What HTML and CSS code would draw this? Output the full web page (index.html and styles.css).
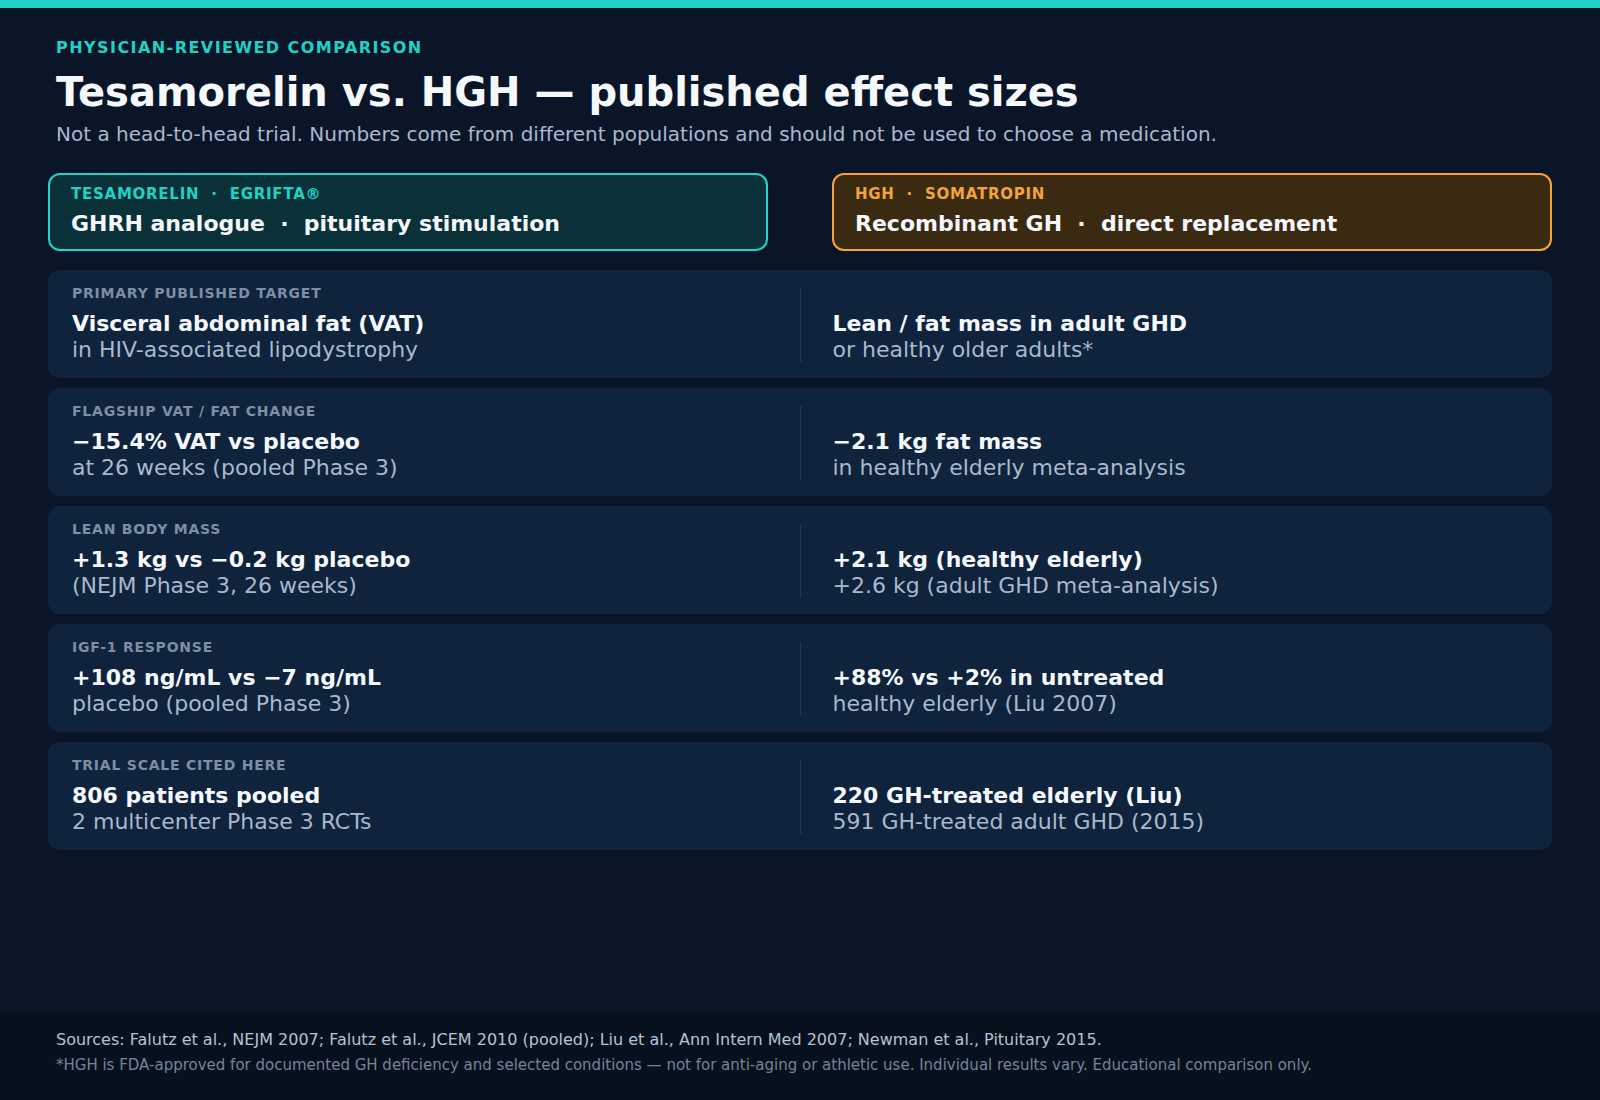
FILE: index.html
```html
<!DOCTYPE html>
<html lang="en">
<head>
<meta charset="utf-8">
<title>Tesamorelin vs. HGH</title>
<link rel="stylesheet" href="styles.css">
</head>
<body>
<div class="topbar"></div>
<div class="page">
  <header class="hero">
    <div class="eyebrow">PHYSICIAN-REVIEWED COMPARISON</div>
    <h1 class="title">Tesamorelin vs. HGH — published effect sizes</h1>
    <p class="subtitle">Not a head-to-head trial. Numbers come from different populations and should not be used to choose a medication.</p>
  </header>

  <section class="compare">
    <div class="heads">
      <div class="head head-teal">
        <div class="head-label">TESAMORELIN &nbsp;·&nbsp; EGRIFTA®</div>
        <div class="head-title">GHRH analogue &nbsp;·&nbsp; pituitary stimulation</div>
      </div>
      <div class="head head-amber">
        <div class="head-label">HGH &nbsp;·&nbsp; SOMATROPIN</div>
        <div class="head-title">Recombinant GH &nbsp;·&nbsp; direct replacement</div>
      </div>
    </div>

    <div class="row">
      <div class="cell">
        <div class="label">PRIMARY PUBLISHED TARGET</div>
        <div class="value">Visceral abdominal fat (VAT)</div>
        <div class="sub">in HIV-associated lipodystrophy</div>
      </div>
      <div class="divider"></div>
      <div class="cell cell-right">
        <div class="value">Lean / fat mass in adult GHD</div>
        <div class="sub">or healthy older adults*</div>
      </div>
    </div>

    <div class="row">
      <div class="cell">
        <div class="label">FLAGSHIP VAT / FAT CHANGE</div>
        <div class="value">−15.4% VAT vs placebo</div>
        <div class="sub">at 26 weeks (pooled Phase 3)</div>
      </div>
      <div class="divider"></div>
      <div class="cell cell-right">
        <div class="value">−2.1 kg fat mass</div>
        <div class="sub">in healthy elderly meta-analysis</div>
      </div>
    </div>

    <div class="row">
      <div class="cell">
        <div class="label">LEAN BODY MASS</div>
        <div class="value">+1.3 kg vs −0.2 kg placebo</div>
        <div class="sub">(NEJM Phase 3, 26 weeks)</div>
      </div>
      <div class="divider"></div>
      <div class="cell cell-right">
        <div class="value">+2.1 kg (healthy elderly)</div>
        <div class="sub">+2.6 kg (adult GHD meta-analysis)</div>
      </div>
    </div>

    <div class="row">
      <div class="cell">
        <div class="label">IGF-1 RESPONSE</div>
        <div class="value">+108 ng/mL vs −7 ng/mL</div>
        <div class="sub">placebo (pooled Phase 3)</div>
      </div>
      <div class="divider"></div>
      <div class="cell cell-right">
        <div class="value">+88% vs +2% in untreated</div>
        <div class="sub">healthy elderly (Liu 2007)</div>
      </div>
    </div>

    <div class="row">
      <div class="cell">
        <div class="label">TRIAL SCALE CITED HERE</div>
        <div class="value">806 patients pooled</div>
        <div class="sub">2 multicenter Phase 3 RCTs</div>
      </div>
      <div class="divider"></div>
      <div class="cell cell-right">
        <div class="value">220 GH-treated elderly (Liu)</div>
        <div class="sub">591 GH-treated adult GHD (2015)</div>
      </div>
    </div>
  </section>
</div>
<footer class="footer">
  <p class="sources">Sources: Falutz et al., NEJM 2007; Falutz et al., JCEM 2010 (pooled); Liu et al., Ann Intern Med 2007; Newman et al., Pituitary 2015.</p>
  <p class="note">*HGH is FDA-approved for documented GH deficiency and selected conditions — not for anti-aging or athletic use. Individual results vary. Educational comparison only.</p>
</footer>
</body>
</html>
```

FILE: styles.css
```css
* { box-sizing: border-box; }

html, body {
  margin: 0;
  padding: 0;
}

body {
  width: 1600px;
  height: 1100px;
  background: #0a1628;
  font-family: "DejaVu Sans", Verdana, sans-serif;
  color: #f3f6fb;
  display: flex;
  flex-direction: column;
  overflow: hidden;
}

.topbar {
  height: 8px;
  background: #20d1c5;
  flex: none;
}

.page {
  flex: 1;
  padding: 0 48px;
}

.hero {
  padding: 30px 8px 0;
}

.eyebrow {
  font-size: 16px;
  line-height: 20px;
  font-weight: 700;
  letter-spacing: 0.09em;
  color: #20d1c5;
}

.title {
  margin: 10px 0 0;
  font-size: 40px;
  line-height: 48px;
  font-weight: 700;
  color: #f5f8fd;
}

.subtitle {
  margin: 4px 0 0;
  font-size: 20px;
  line-height: 28px;
  color: #a9b8cc;
}

.compare {
  margin-top: 25px;
}

.heads {
  display: grid;
  grid-template-columns: 1fr 1fr;
  column-gap: 64px;
  margin-bottom: 19px;
}

.head {
  border: 2px solid;
  border-radius: 12px;
  padding: 10px 21px 11px;
}

.head-teal {
  background: #0a3038;
  border-color: #22d3c7;
}

.head-amber {
  background: #3b2a12;
  border-color: #f4a43a;
}

.head-label {
  font-size: 15px;
  line-height: 18px;
  font-weight: 700;
  letter-spacing: 0.05em;
}

.head-teal .head-label { color: #20d1c5; }
.head-amber .head-label { color: #f2a33a; }

.head-title {
  margin-top: 7px;
  font-size: 22px;
  line-height: 28px;
  font-weight: 700;
  color: #f5f8fd;
}

.row {
  display: grid;
  grid-template-columns: 1fr 1px 1fr;
  column-gap: 32px;
  background: #0f233c;
  border-radius: 12px;
  padding: 15px 24px 15px;
  margin-bottom: 10px;
}

.label {
  font-size: 14px;
  line-height: 16px;
  font-weight: 700;
  letter-spacing: 0.055em;
  color: #7d8ea5;
  margin-bottom: 10px;
}

.value {
  font-size: 22px;
  line-height: 26px;
  font-weight: 700;
  color: #f5f8fd;
}

.sub {
  font-size: 22px;
  line-height: 26px;
  color: #a9b8cc;
}

.cell-right {
  align-self: end;
}

.divider {
  background: #1e3a5a;
  margin: 3px 0 1px;
}

.footer {
  flex: none;
  height: 87px;
  background: #07111e;
  padding: 17px 56px 0;
}

.sources {
  margin: 0;
  font-size: 16px;
  line-height: 20px;
  color: #b6c2d2;
}

.note {
  margin: 5px 0 0;
  font-size: 15px;
  line-height: 20px;
  color: #748499;
}
```
